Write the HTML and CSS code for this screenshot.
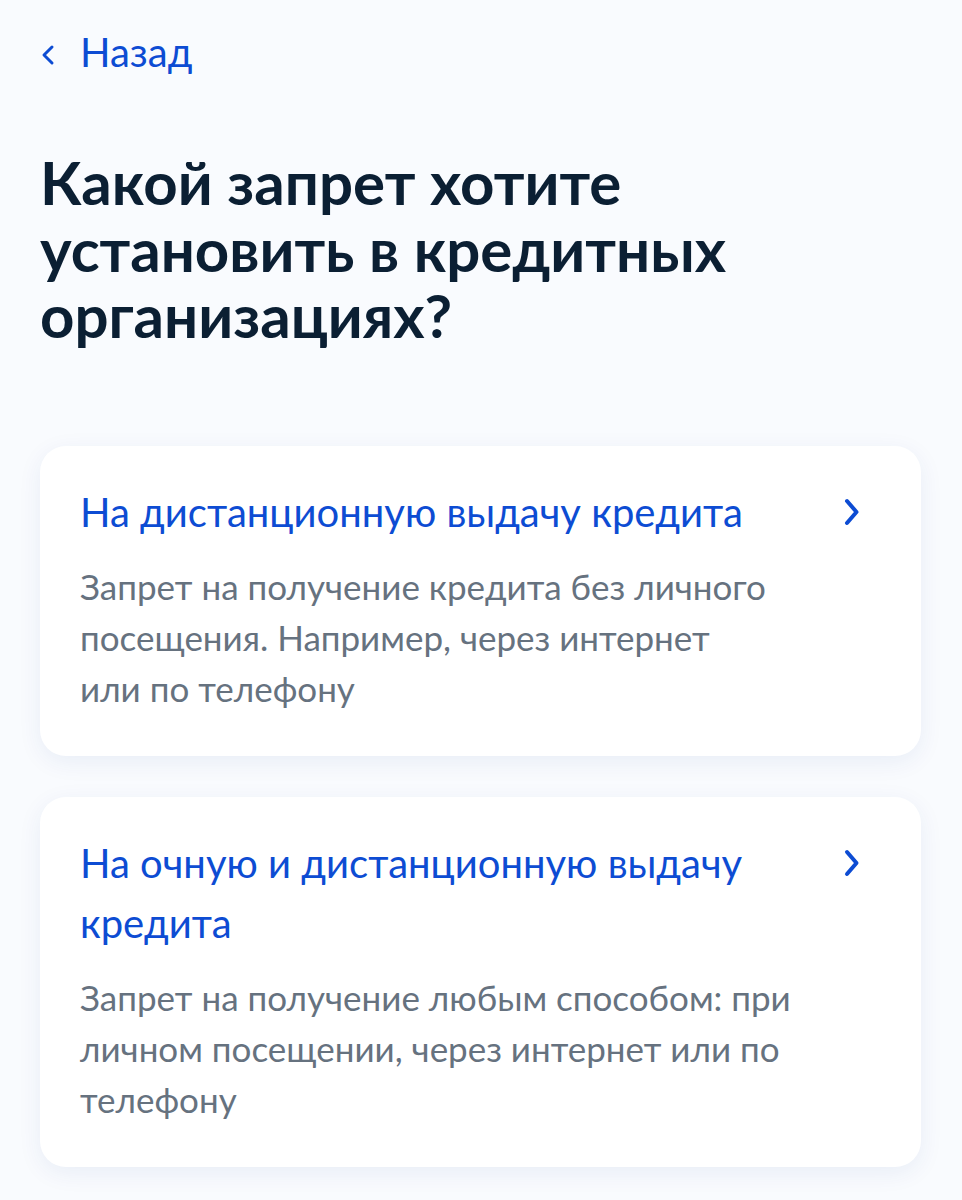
FILE: index.html
```html
<!DOCTYPE html>
<html lang="ru">
<head>
<meta charset="utf-8">
<title>Запрет на кредиты</title>
<link rel="stylesheet" href="styles.css">
</head>
<body>
<div class="page">
  <a class="back" href="#">
    <svg class="back-icon" width="16" height="24" viewBox="0 0 16 24" aria-hidden="true"><path d="M12 4 L4 12 L12 20" fill="none" stroke="currentColor" stroke-width="3" stroke-linecap="round" stroke-linejoin="round"/></svg>
    <span>Назад</span>
  </a>
  <h1 class="title">Какой запрет хотите установить в&nbsp;кредитных организациях?</h1>
  <div class="cards">
    <a class="card" href="#">
      <div class="card-text">
        <div class="card-title">На дистанционную выдачу кредита</div>
        <div class="card-desc">Запрет на получение кредита без личного посещения. Например, через интернет или&nbsp;по&nbsp;телефону</div>
      </div>
      <div class="card-arrow">
        <svg width="18" height="28" viewBox="0 0 18 28" aria-hidden="true"><path d="M4 3 L13.5 14 L4 25" fill="none" stroke="currentColor" stroke-width="4" stroke-linecap="round" stroke-linejoin="round"/></svg>
      </div>
    </a>
    <a class="card" href="#">
      <div class="card-text">
        <div class="card-title">На очную и дистанционную выдачу кредита</div>
        <div class="card-desc">Запрет на получение любым способом: при личном посещении, через интернет или&nbsp;по телефону</div>
      </div>
      <div class="card-arrow">
        <svg width="18" height="28" viewBox="0 0 18 28" aria-hidden="true"><path d="M4 3 L13.5 14 L4 25" fill="none" stroke="currentColor" stroke-width="4" stroke-linecap="round" stroke-linejoin="round"/></svg>
      </div>
    </a>
  </div>
</div>
</body>
</html>
```
FILE: styles.css
```css
html, body {
  margin: 0;
  padding: 0;
  background: #f9fbfe;
}
body {
  font-family: Lato, "Noto Sans", sans-serif;
  color: #0b1f33;
}
.page {
  padding: 28px 41px 40px 40px;
}
.back {
  display: flex;
  align-items: center;
  gap: 24px;
  color: #0d4cd3;
  text-decoration: none;
  font-size: 40px;
  line-height: 48px;
  height: 48px;
}
.back-icon {
  display: block;
  margin-top: 6px;
}
.title {
  margin: 73px 0 97px 0;
  max-width: 760px;
  font-size: 60px;
  line-height: 66.5px;
  font-weight: 700;
  color: #0b1f33;
}
.cards {
  display: flex;
  flex-direction: column;
  gap: 41px;
}
.card {
  display: flex;
  align-items: flex-start;
  gap: 26px;
  background: #ffffff;
  border-radius: 26px;
  padding: 36px 53px 42px 40px;
  text-decoration: none;
  box-shadow: 0 6px 24px rgba(20, 60, 140, 0.07);
}
.card-text {
  flex: 1;
  min-width: 0;
}
.card-title {
  color: #0d4cd3;
  font-size: 40px;
  line-height: 60px;
}
.card-desc {
  margin-top: 19px;
  color: #66727f;
  font-size: 35px;
  line-height: 51px;
}
.card-arrow {
  flex: 0 0 32px;
  height: 60px;
  display: flex;
  align-items: center;
  justify-content: center;
  color: #0d4cd3;
}
.card-arrow svg {
  display: block;
}
```
